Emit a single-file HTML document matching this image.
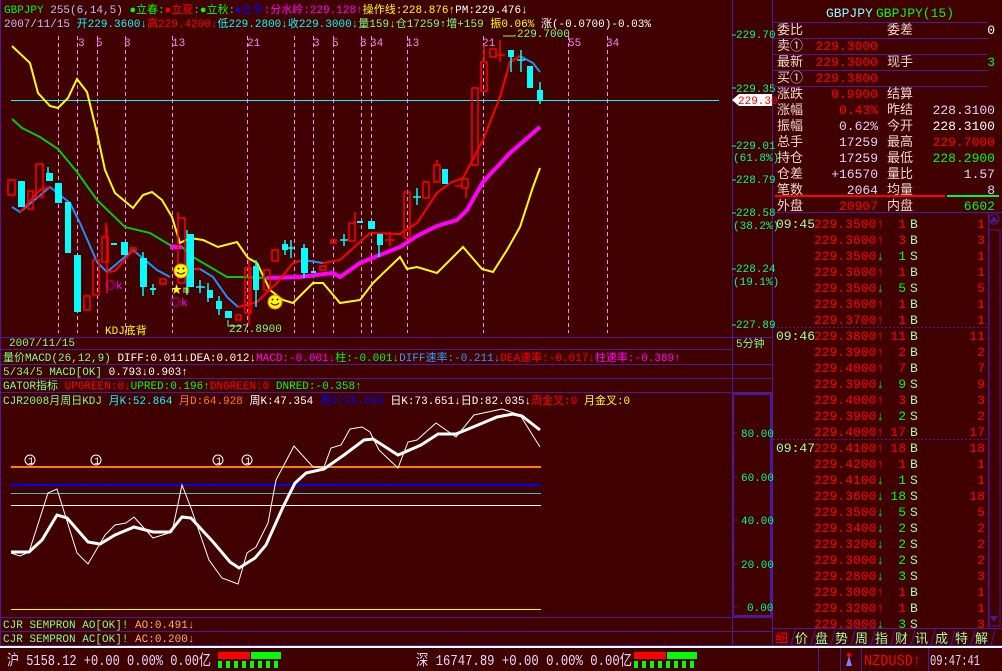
<!DOCTYPE html>
<html><head><meta charset="utf-8"><style>
html,body{margin:0;padding:0;background:#400000;overflow:hidden}
svg{display:block}
text{font-family:"Liberation Mono","Noto Sans CJK SC","WenQuanYi Zen Hei",monospace;font-size:11px}
.b{font-size:13px}
.s{font-size:10px}
.st{font-size:15px}
</style></head><body>
<svg width="1002" height="671" viewBox="0 0 1002 671" xmlns="http://www.w3.org/2000/svg">
<rect width="1002" height="671" fill="#400000"/>
<g stroke="#4b1a9c" stroke-width="1" fill="none">
<line x1="0.5" y1="0" x2="0.5" y2="645"/>
<line x1="732.5" y1="0" x2="732.5" y2="645"/>
<line x1="772.5" y1="0" x2="772.5" y2="645"/>
<line x1="0" y1="337.5" x2="772" y2="337.5"/>
<line x1="0" y1="349.5" x2="732" y2="349.5"/>
<line x1="0" y1="364.5" x2="772" y2="364.5"/>
<line x1="0" y1="378.5" x2="772" y2="378.5"/>
<line x1="0" y1="392.5" x2="772" y2="392.5"/>
<line x1="0" y1="617.5" x2="772" y2="617.5"/>
<line x1="0" y1="631.5" x2="772" y2="631.5"/>
<line x1="0" y1="645.5" x2="1002" y2="645.5"/>
<line x1="773" y1="22.5" x2="988" y2="22.5"/>
<line x1="773" y1="38.5" x2="988" y2="38.5"/>
<line x1="773" y1="54.5" x2="988" y2="54.5"/>
<line x1="773" y1="70.5" x2="988" y2="70.5"/>
<line x1="773" y1="86.5" x2="988" y2="86.5"/>
<line x1="773" y1="212.5" x2="1002" y2="212.5"/>
<line x1="988.5" y1="212" x2="988.5" y2="628"/>
<line x1="773" y1="628.5" x2="1002" y2="628.5"/>
</g>
<rect x="733" y="394" width="38" height="222" fill="none" stroke="#4b1a9c" stroke-width="2"/>
<g stroke="#4b1a9c" stroke-dasharray="2,2"><line x1="773" y1="327.5" x2="988" y2="327.5"/><line x1="773" y1="439.5" x2="988" y2="439.5"/></g>
<line x1="775" y1="196" x2="945" y2="196" stroke="#ff0000" stroke-width="2"/>
<line x1="947" y1="196" x2="999" y2="196" stroke="#00ff00" stroke-width="2"/>

<text x="4" y="13"><tspan fill="#00ff00">GBPJPY</tspan> <tspan fill="#c0c0ff">255(6,14,5)</tspan> <tspan fill="#00ff00">●立春:</tspan><tspan fill="#ff0000">●立夏</tspan><tspan fill="#00ff00">:●立秋:</tspan><tspan fill="#0000ff">●立冬</tspan><tspan fill="#ff00ff">:分水岭:229.128↑</tspan><tspan fill="#ffff00">操作线:228.876↑</tspan><tspan fill="#ffffff">PM:229.476↓</tspan></text>
<text x="4" y="27"><tspan fill="#c0c0ff">2007/11/15</tspan> <tspan fill="#00ffff">开229.3600↓</tspan><tspan fill="#ff0000">高229.4200↓</tspan><tspan fill="#00ffff">低229.2800↓收229.3000↓</tspan><tspan fill="#80ff80">量159↓仓17259↑增+159</tspan> <tspan fill="#ffff00">振0.06%</tspan> <tspan fill="#ffffff">涨(-0.0700)-0.03%</tspan></text>

<g stroke="#ff80ff" stroke-dasharray="4,3" stroke-width="1">
<line x1="58.5" y1="36" x2="58.5" y2="333"/><line x1="77.5" y1="36" x2="77.5" y2="333"/><line x1="97.5" y1="36" x2="97.5" y2="333"/><line x1="125.5" y1="36" x2="125.5" y2="333"/><line x1="172.5" y1="36" x2="172.5" y2="333"/><line x1="247.5" y1="36" x2="247.5" y2="333"/><line x1="294.5" y1="36" x2="294.5" y2="333"/><line x1="313.5" y1="36" x2="313.5" y2="333"/><line x1="333.5" y1="36" x2="333.5" y2="333"/><line x1="361.5" y1="36" x2="361.5" y2="333"/><line x1="371.5" y1="36" x2="371.5" y2="333"/><line x1="407.5" y1="36" x2="407.5" y2="333"/><line x1="483.5" y1="36" x2="483.5" y2="333"/><line x1="568.5" y1="36" x2="568.5" y2="333"/><line x1="607.5" y1="36" x2="607.5" y2="333"/>
</g>
<g fill="#ff80ff"><text x="78" y="46">3</text><text x="96" y="46">5</text><text x="124" y="46">8</text><text x="172" y="46">13</text><text x="247" y="46">21</text><text x="313" y="46">3</text><text x="332" y="46">5</text><text x="360" y="46">8</text><text x="370" y="46">34</text><text x="406" y="46">13</text><text x="482" y="46">21</text><text x="568" y="46">55</text><text x="606" y="46">34</text></g>

<line x1="11" y1="100.5" x2="719" y2="100.5" stroke="#00ffff"/>

<polyline fill="none" stroke="#ffff00" stroke-width="2" points="12,46 30,63 38,93 50,106 58,108 68,98 77,79 87,92 97,133 105,170 115,193 133,208 143,195 152,192 162,200 172,217 180,243 190,238 203,240 218,247 237,242 248,258 257,263 270,290 283,300 293,303 313,283 323,283 340,303 360,300 373,283 400,257 407,269 417,267 437,273 463,247 482,269 493,272 507,250 520,227 533,187 540,168"/>
<polyline fill="none" stroke="#00cc00" stroke-width="2" points="12,119 22,128 40,137 58,149 77,172 97,200 125,227 150,233 170,245 182,247 193,257 227,277 240,277 267,278"/>
<polyline fill="none" stroke="#ff00ff" stroke-width="4" points="170,247 182,247"/>
<polyline fill="none" stroke="#ff00ff" stroke-width="4" points="267,278 300,277 333,273 340,277 360,263 400,247 417,236 437,226 457,220 467,210 483,182 510,153 540,127"/>
<polyline fill="none" stroke="#1e90ff" stroke-width="2" points="12,207 20,212 50,187 70,203 80,223 97,262 107,272 133,250 157,270 170,277"/>
<polyline fill="none" stroke="#ff0000" stroke-width="2" points="20,212 40,190 50,187"/>
<polyline fill="none" stroke="#ff0000" stroke-width="2" points="107,272 115,271 133,250"/>
<polyline fill="none" stroke="#ff0000" stroke-width="2" points="180,269 200,269"/>
<polyline fill="none" stroke="#1e90ff" stroke-width="2" points="200,269 213,277 227,297 238,307"/>
<polyline fill="none" stroke="#ff0000" stroke-width="2" points="238,307 257,302 277,283 293,263 303,260"/>
<polyline fill="none" stroke="#1e90ff" stroke-width="2" points="303,260 323,263"/>
<polyline fill="none" stroke="#ff0000" stroke-width="2" points="323,263 340,260 370,233 400,234 417,223 437,193 450,183 463,178 483,140 500,97 510,62 520,56"/>
<polyline fill="none" stroke="#1e90ff" stroke-width="2" points="520,56 533,63 540,72"/>

<g fill="none" stroke="#ff0000" stroke-width="1.5">
<rect x="8" y="180" width="7" height="15"/><rect x="28" y="191" width="5" height="18"/><rect x="36" y="164" width="7" height="33"/><rect x="84" y="296" width="6" height="14"/><rect x="93" y="260" width="6" height="35"/><rect x="102" y="237" width="6" height="25"/><rect x="130" y="248" width="6" height="4"/><rect x="160" y="279" width="6" height="5"/><rect x="178" y="218" width="7" height="65"/><rect x="236" y="315" width="5" height="5"/><rect x="245" y="268" width="6" height="45"/><rect x="264" y="270" width="6" height="20"/><rect x="272" y="250" width="6" height="11"/><rect x="320" y="266" width="6" height="4"/><rect x="331" y="240" width="5" height="3"/><rect x="349" y="223" width="6" height="18"/><rect x="404" y="192" width="6" height="46"/><rect x="423" y="182" width="6" height="16"/><rect x="434" y="165" width="6" height="17"/><rect x="462" y="179" width="6" height="9"/><rect x="472" y="88" width="6" height="77"/><rect x="481" y="62" width="6" height="29"/><rect x="490" y="49" width="6" height="8"/>
<path d="M106 223V237M107 227V293M178 212V218M249 260V325M355 212V223M437 160V165M484 45V62M500 40V62M497 55H505M385 240H395M390 232V246M455 186H462M466 188V198"/>
</g>
<g fill="#00ffff">
<rect x="18" y="181" width="7" height="26"/><rect x="46" y="173" width="7" height="8"/><rect x="55" y="183" width="7" height="20"/><rect x="65" y="202" width="6" height="51"/><rect x="74" y="255" width="7" height="57"/><rect x="111" y="243" width="6" height="2"/><rect x="121" y="242" width="7" height="13"/><rect x="140" y="258" width="7" height="29"/><rect x="150" y="288" width="6" height="2"/><rect x="187" y="234" width="7" height="53"/><rect x="207" y="290" width="6" height="8"/><rect x="216" y="301" width="6" height="8"/><rect x="225" y="311" width="7" height="7"/><rect x="253" y="266" width="6" height="24"/><rect x="282" y="244" width="6" height="6"/><rect x="301" y="248" width="7" height="25"/><rect x="311" y="271" width="5" height="2"/><rect x="357" y="221" width="6" height="2"/><rect x="368" y="221" width="7" height="8"/><rect x="377" y="234" width="6" height="11"/><rect x="442" y="169" width="6" height="15"/><rect x="508" y="50" width="6" height="7"/><rect x="527" y="66" width="6" height="22"/><rect x="537" y="90" width="6" height="10"/>
</g>
<g stroke="#00ffff" stroke-width="1.5"><path d="M48 167V173M143 252V296M153 284V295M187 230V295M200 280V293M196 287H205M208 283V302M219 296V315M256 260V307M285 240V255M291 240V258M288 248H295M304 244V278M340 240H348M344 234V246M417 188V205M413 197H421M521 50V72M517 60H525M540 82V104M511 57V72M379 245V257"/></g>
<text x="229" y="332" fill="#80ff80">227.8900</text>
<path d="M228 320V326H242" stroke="#80ff80" fill="none"/>
<text x="517" y="37" fill="#80ff80">229.7000</text><path d="M503 36H515V35" stroke="#80ff80" fill="none"/>
<g><circle cx="181" cy="271" r="7" fill="#ffff00" stroke="#ff8000"/><circle cx="275" cy="302" r="7" fill="#ffff00" stroke="#ff8000"/><path d="M177 272q4 4 8 0M271 303q4 4 8 0" stroke="#400000" fill="none"/><g fill="#400000"><circle cx="178.5" cy="268.5" r="1"/><circle cx="183.5" cy="268.5" r="1"/><circle cx="272.5" cy="299.5" r="1"/><circle cx="277.5" cy="299.5" r="1"/></g></g>
<text x="105" y="289" fill="#ff00ff">◎k</text><text x="170" y="306" fill="#ff00ff">◎k</text><text x="171" y="293" fill="#ffff00">★</text><text x="183" y="293" fill="#ffff00" class="s">m</text>
<text x="105" y="334" fill="#ffff00">KDJ底背</text>

<g fill="#00ff80" stroke="none">
<text x="736" y="38">229.70</text><text x="736" y="92">229.35</text><text x="736" y="149">229.01</text><text x="733" y="161">(61.8%)</text><text x="736" y="183">228.79</text><text x="736" y="216">228.58</text><text x="733" y="229">(38.2%)</text><text x="736" y="272">228.24</text><text x="733" y="285">(19.1%)</text><text x="736" y="328">227.89</text>
</g>
<g stroke="#00ff80"><path d="M732 35H736M732 88H736M732 146H736M732 180H736M732 213H736M732 269H736M732 325H736"/></g>
<path d="M732 100L739 94H772V106H739Z" fill="#ffffff"/>
<text x="738" y="104" fill="#ff0000">229.30</text>
<text x="736" y="347" fill="#80ff80">5分钟</text>

<text x="9" y="346" fill="#80ff80">2007/11/15</text>
<text x="3" y="361"><tspan fill="#80ff80">量价MACD(26,12,9)</tspan> <tspan fill="#ffffff">DIFF:0.011↓DEA:0.012↓</tspan><tspan fill="#ff00ff">MACD:-0.001↓</tspan><tspan fill="#00ff00">柱:-0.001↓</tspan><tspan fill="#3399ff">DIFF速率:-0.211↓</tspan><tspan fill="#ff0000">DEA速率:-0.017↓</tspan><tspan fill="#ff00ff">柱速率:-0.389↑</tspan></text>
<text x="3" y="375"><tspan fill="#80ff80">5/34/5 MACD[OK]</tspan> <tspan fill="#ffffff">0.793↓0.903↑</tspan></text>
<text x="3" y="389"><tspan fill="#80ff80">GATOR指标</tspan> <tspan fill="#ff0000">UPGREEN:0↓</tspan><tspan fill="#00ff00">UPRED:0.196↑</tspan><tspan fill="#ff0000">DNGREEN:0</tspan> <tspan fill="#00ff00">DNRED:-0.358↑</tspan></text>
<text x="3" y="404"><tspan fill="#80ff80">CJR2008月周日KDJ</tspan> <tspan fill="#00ffff">月K:52.864</tspan> <tspan fill="#ff8000">月D:64.928</tspan> <tspan fill="#ffffff">周K:47.354</tspan> <tspan fill="#0000ff">周D:56.893</tspan> <tspan fill="#ffffff">日K:73.651↓日D:82.035↓</tspan><tspan fill="#ff0000">周金叉:0</tspan> <tspan fill="#ffff00">月金叉:0</tspan></text>

<line x1="11" y1="467" x2="541" y2="467" stroke="#ff8000" stroke-width="2"/>
<line x1="11" y1="485" x2="541" y2="485" stroke="#0000ff" stroke-width="2"/>
<line x1="11" y1="493.5" x2="541" y2="493.5" stroke="#40c0c0"/>
<line x1="11" y1="505.5" x2="541" y2="505.5" stroke="#ffffff"/>
<line x1="11" y1="609.5" x2="541" y2="609.5" stroke="#ffff00"/>
<polyline fill="none" stroke="#ffffff" stroke-width="1" points="11,553 20,556 29,552 48,493 57,489 77,553 88,564 105,535 115,525 126,523 134,517 153,538 172,532 182,485 191,508 209,560 222,578 238,584 247,553 256,547 268,523 276,480 294,446 313,467 324,467 331,448 341,445 350,429 362,427 370,432 379,450 398,468 408,442 417,440 436,423 456,437 474,415 502,409 520,415 540,447"/>
<polyline fill="none" stroke="#ffffff" stroke-width="3" points="11,552 29,552 42,540 57,515 67,518 88,542 100,544 115,535 134,527 153,532 170,532 182,517 191,518 214,543 230,562 239,568 255,558 266,545 283,507 295,483 306,473 324,469 344,455 364,440 373,439 398,455 421,445 438,434 456,434 478,425 497,417 513,414 522,416 540,430"/>
<g fill="none" stroke="#ffffff"><circle cx="30" cy="460" r="5"/><circle cx="96" cy="460" r="5"/><circle cx="218" cy="460" r="5"/><circle cx="247" cy="460" r="5"/></g>
<g fill="#ffffff"><text x="28" y="464" class="s">1</text><text x="94" y="464" class="s">1</text><text x="216" y="464" class="s">1</text><text x="245" y="464" class="s">1</text></g>
<g fill="#00ff80"><text x="741" y="437">80.00</text><text x="741" y="481">60.00</text><text x="741" y="524">40.00</text><text x="741" y="568">20.00</text><text x="747" y="611">0.00</text></g>
<g stroke="#4b1a9c"><path d="M733 433H737M733 477H737M733 520H737M733 564H737M733 607H737M733 455H735M733 498H735M733 542H735M733 586H735"/></g>
<text x="3" y="628"><tspan fill="#80ff80">CJR SEMPRON AO[OK]!</tspan> <tspan fill="#ffb060">AO:0.491↓</tspan></text>
<text x="3" y="642"><tspan fill="#80ff80">CJR SEMPRON  AC[OK]!</tspan> <tspan fill="#ffb060">AC:0.200↓</tspan></text>

<text x="826" y="17" class="b" fill="#80ffff">GBPJPY</text><text x="876" y="17" class="b" fill="#00ff00">GBPJPY(15)</text>
<g fill="#f0d8c8">
<text x="777" y="34" class="b">委比</text><text x="887" y="34" class="b">委差</text>
<text x="777" y="50" class="b">卖①</text>
<text x="777" y="66" class="b">最新</text><text x="887" y="66" class="b">现手</text>
<text x="777" y="82" class="b">买①</text>
<text x="777" y="98" class="b">涨跌</text><text x="887" y="98" class="b">结算</text>
<text x="777" y="114" class="b">涨幅</text><text x="887" y="114" class="b">昨结</text>
<text x="777" y="130" class="b">振幅</text><text x="887" y="130" class="b">今开</text>
<text x="777" y="146" class="b">总手</text><text x="887" y="146" class="b">最高</text>
<text x="777" y="162" class="b">持仓</text><text x="887" y="162" class="b">最低</text>
<text x="777" y="178" class="b">仓差</text><text x="887" y="178" class="b">量比</text>
<text x="777" y="194" class="b">笔数</text><text x="887" y="194" class="b">均量</text>
<text x="777" y="210" class="b">外盘</text><text x="887" y="210" class="b">内盘</text>
</g>
<g text-anchor="end">
<text x="995" y="34" class="b" fill="#ffffff">0</text>
<text x="878" y="50" class="b" fill="#ff0000">229.3000</text>
<text x="878" y="66" class="b" fill="#ff0000">229.3000</text><text x="995" y="66" class="b" fill="#00ff00">3</text>
<text x="878" y="82" class="b" fill="#ff0000">229.3800</text>
<text x="878" y="98" class="b" fill="#ff0000">0.9900</text>
<text x="878" y="114" class="b" fill="#ff0000">0.43%</text><text x="995" y="114" class="b" fill="#e0d0ff">228.3100</text>
<text x="878" y="130" class="b" fill="#e0d0ff">0.62%</text><text x="995" y="130" class="b" fill="#ffffff">228.3100</text>
<text x="878" y="146" class="b" fill="#e0d0ff">17259</text><text x="995" y="146" class="b" fill="#ff0000">229.7000</text>
<text x="878" y="162" class="b" fill="#e0d0ff">17259</text><text x="995" y="162" class="b" fill="#00ff00">228.2900</text>
<text x="878" y="178" class="b" fill="#e0d0ff">+16570</text><text x="995" y="178" class="b" fill="#e0d0ff">1.57</text>
<text x="878" y="194" class="b" fill="#e0d0ff">2064</text><text x="995" y="194" class="b" fill="#e0d0ff">8</text>
<text x="878" y="210" class="b" fill="#ff0000">20907</text><text x="995" y="210" class="b" fill="#00ff00">6602</text>
</g>

<text x="776" y="228" class="b" fill="#a0ffa0">09:45</text>
<text x="776" y="340" class="b" fill="#a0ffa0">09:46</text>
<text x="776" y="452" class="b" fill="#a0ffa0">09:47</text>
<g fill="#ff0000">
<text x="814" y="228" class="b">229.3500↑</text>
<text x="814" y="244" class="b">229.3600↑</text>
<text x="814" y="260" class="b">229.3500<tspan fill="#00ff00">↓</tspan></text>
<text x="814" y="276" class="b">229.3600↑</text>
<text x="814" y="292" class="b">229.3500<tspan fill="#00ff00">↓</tspan></text>
<text x="814" y="308" class="b">229.3600↑</text>
<text x="814" y="324" class="b">229.3700↑</text>
<text x="814" y="340" class="b">229.3800↑</text>
<text x="814" y="356" class="b">229.3900↑</text>
<text x="814" y="372" class="b">229.4000↑</text>
<text x="814" y="388" class="b">229.3900<tspan fill="#00ff00">↓</tspan></text>
<text x="814" y="404" class="b">229.4000↑</text>
<text x="814" y="420" class="b">229.3900<tspan fill="#00ff00">↓</tspan></text>
<text x="814" y="436" class="b">229.4000↑</text>
<text x="814" y="452" class="b">229.4100↑</text>
<text x="814" y="468" class="b">229.4200↑</text>
<text x="814" y="484" class="b">229.4100<tspan fill="#00ff00">↓</tspan></text>
<text x="814" y="500" class="b">229.3600<tspan fill="#00ff00">↓</tspan></text>
<text x="814" y="516" class="b">229.3500<tspan fill="#00ff00">↓</tspan></text>
<text x="814" y="532" class="b">229.3400<tspan fill="#00ff00">↓</tspan></text>
<text x="814" y="548" class="b">229.3200<tspan fill="#00ff00">↓</tspan></text>
<text x="814" y="564" class="b">229.3000<tspan fill="#00ff00">↓</tspan></text>
<text x="814" y="580" class="b">229.2800<tspan fill="#00ff00">↓</tspan></text>
<text x="814" y="596" class="b">229.3000↑</text>
<text x="814" y="612" class="b">229.3200↑</text>
<text x="814" y="628" class="b">229.3000<tspan fill="#00ff00">↓</tspan></text>
</g>
<g text-anchor="end">
<text x="906" y="228" class="b" fill="#ff0000">1</text>
<text x="906" y="244" class="b" fill="#ff0000">3</text>
<text x="906" y="260" class="b" fill="#00ff00">1</text>
<text x="906" y="276" class="b" fill="#ff0000">1</text>
<text x="906" y="292" class="b" fill="#00ff00">5</text>
<text x="906" y="308" class="b" fill="#ff0000">1</text>
<text x="906" y="324" class="b" fill="#ff0000">1</text>
<text x="906" y="340" class="b" fill="#ff0000">11</text>
<text x="906" y="356" class="b" fill="#ff0000">2</text>
<text x="906" y="372" class="b" fill="#ff0000">7</text>
<text x="906" y="388" class="b" fill="#00ff00">9</text>
<text x="906" y="404" class="b" fill="#ff0000">3</text>
<text x="906" y="420" class="b" fill="#00ff00">2</text>
<text x="906" y="436" class="b" fill="#ff0000">17</text>
<text x="906" y="452" class="b" fill="#ff0000">18</text>
<text x="906" y="468" class="b" fill="#ff0000">1</text>
<text x="906" y="484" class="b" fill="#00ff00">1</text>
<text x="906" y="500" class="b" fill="#00ff00">18</text>
<text x="906" y="516" class="b" fill="#00ff00">5</text>
<text x="906" y="532" class="b" fill="#00ff00">2</text>
<text x="906" y="548" class="b" fill="#00ff00">2</text>
<text x="906" y="564" class="b" fill="#00ff00">2</text>
<text x="906" y="580" class="b" fill="#00ff00">3</text>
<text x="906" y="596" class="b" fill="#ff0000">1</text>
<text x="906" y="612" class="b" fill="#ff0000">1</text>
<text x="906" y="628" class="b" fill="#00ff00">3</text>
</g>
<g fill="#a0ffa0">
<text x="910" y="228" class="b">B</text><text x="910" y="244" class="b">B</text><text x="910" y="260" class="b">S</text><text x="910" y="276" class="b">B</text><text x="910" y="292" class="b">S</text><text x="910" y="308" class="b">B</text><text x="910" y="324" class="b">B</text><text x="910" y="340" class="b">B</text><text x="910" y="356" class="b">B</text><text x="910" y="372" class="b">B</text><text x="910" y="388" class="b">S</text><text x="910" y="404" class="b">B</text><text x="910" y="420" class="b">S</text><text x="910" y="436" class="b">B</text><text x="910" y="452" class="b">B</text><text x="910" y="468" class="b">B</text><text x="910" y="484" class="b">S</text><text x="910" y="500" class="b">S</text><text x="910" y="516" class="b">S</text><text x="910" y="532" class="b">S</text><text x="910" y="548" class="b">S</text><text x="910" y="564" class="b">S</text><text x="910" y="580" class="b">S</text><text x="910" y="596" class="b">B</text><text x="910" y="612" class="b">B</text><text x="910" y="628" class="b">S</text>
</g>
<g text-anchor="end" fill="#ff0000">
<text x="985" y="228" class="b">1</text><text x="985" y="244" class="b">3</text><text x="985" y="260" class="b">1</text><text x="985" y="276" class="b">1</text><text x="985" y="292" class="b">5</text><text x="985" y="308" class="b">1</text><text x="985" y="324" class="b">1</text><text x="985" y="340" class="b">11</text><text x="985" y="356" class="b">2</text><text x="985" y="372" class="b">7</text><text x="985" y="388" class="b">9</text><text x="985" y="404" class="b">3</text><text x="985" y="420" class="b">2</text><text x="985" y="436" class="b">17</text><text x="985" y="452" class="b">18</text><text x="985" y="468" class="b">1</text><text x="985" y="484" class="b">1</text><text x="985" y="500" class="b">18</text><text x="985" y="516" class="b">5</text><text x="985" y="532" class="b">2</text><text x="985" y="548" class="b">2</text><text x="985" y="564" class="b">2</text><text x="985" y="580" class="b">3</text><text x="985" y="596" class="b">1</text><text x="985" y="612" class="b">1</text><text x="985" y="628" class="b">3</text>
</g>
<rect x="989" y="230" width="11" height="396" fill="none" stroke="#4b1a9c"/>
<path d="M990 222L994 216L998 222Z" fill="#4b1a9c"/><path d="M990 616L994 622L998 616Z" fill="#4b1a9c"/>
<circle cx="994" cy="219" r="5" fill="none" stroke="#4b1a9c"/>
<g fill="#a0ffa0">
<text x="775" y="643" class="b" fill="#ff0000">细</text><text x="795" y="643" class="b">价</text><text x="815" y="643" class="b">盘</text><text x="835" y="643" class="b">势</text><text x="855" y="643" class="b">周</text><text x="875" y="643" class="b">指</text><text x="895" y="643" class="b">财</text><text x="915" y="643" class="b">讯</text><text x="935" y="643" class="b">成</text><text x="955" y="643" class="b">特</text><text x="975" y="643" class="b">解</text>
</g>
<g stroke="#4b1a9c"><path d="M791 645L795 630M811 645L815 630M831 645L835 630M851 645L855 630M871 645L875 630M891 645L895 630M911 645L915 630M931 645L935 630M951 645L955 630M971 645L975 630M991 645L995 630"/></g>

<rect x="0" y="646" width="1002" height="2" fill="#ffffff"/>
<text x="7" y="665" class="st" fill="#e8d8ff" textLength="204" lengthAdjust="spacingAndGlyphs">沪 5158.12 +0.00 0.00% 0.00亿</text>
<rect x="218" y="652" width="32" height="7" fill="#ff0000"/><rect x="251" y="652" width="30" height="7" fill="#00ff00"/>
<g fill="#00ff00"><rect x="218" y="661" width="4" height="7"/><rect x="226" y="661" width="4" height="7"/><rect x="234" y="661" width="4" height="7"/><rect x="242" y="661" width="4" height="7"/><rect x="250" y="661" width="4" height="7"/><rect x="258" y="661" width="4" height="7"/><rect x="266" y="661" width="4" height="7"/><rect x="274" y="661" width="4" height="7"/></g>
<text x="416" y="665" class="st" fill="#e8d8ff" textLength="216" lengthAdjust="spacingAndGlyphs">深 16747.89 +0.00 0.00% 0.00亿</text>
<rect x="634" y="652" width="32" height="7" fill="#ff0000"/><rect x="667" y="652" width="30" height="7" fill="#00ff00"/>
<g fill="#00ff00"><rect x="634" y="661" width="4" height="7"/><rect x="642" y="661" width="4" height="7"/><rect x="650" y="661" width="4" height="7"/><rect x="658" y="661" width="4" height="7"/><rect x="666" y="661" width="4" height="7"/><rect x="674" y="661" width="4" height="7"/><rect x="682" y="661" width="4" height="7"/><rect x="690" y="661" width="4" height="7"/></g>
<g stroke="#4b1a9c"><path d="M818.5 648V671M840.5 648V671M861.5 648V671M928.5 648V671"/></g>
<path d="M846 666L849 656L852 666Z" fill="#8080ff"/><circle cx="849" cy="655" r="2" fill="#ff0000"/>
<text x="864" y="665" fill="#ff0000" class="st" textLength="57" lengthAdjust="spacingAndGlyphs">NZDUSD↑</text>
<text x="930" y="665" fill="#e8d8ff" class="st" textLength="50" lengthAdjust="spacingAndGlyphs">09:47:41</text>
</svg>
</body></html>
